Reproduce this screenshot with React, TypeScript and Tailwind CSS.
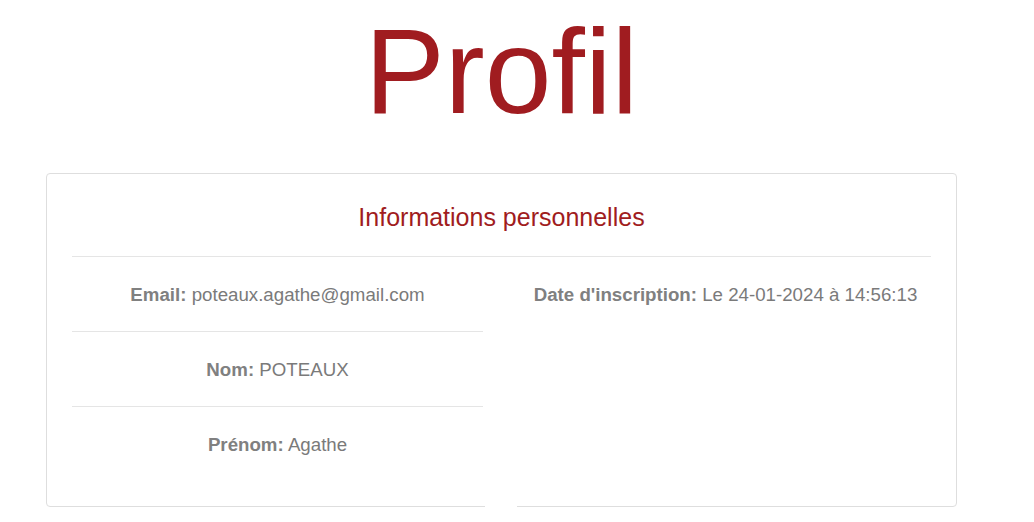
const rows = [
  { label: "Email:", value: "poteaux.agathe@gmail.com" },
  { label: "Nom:", value: "POTEAUX" },
  { label: "Prénom:", value: "Agathe" },
];

const InfoItem = ({ label, value }: { label: string; value: string }) => (
  <p className="py-[26.5px] text-center text-[18.7px] leading-[21px] text-[#7a7a7a]">
    <span className="font-bold text-[#808080]">{label}</span> {value}
  </p>
);

const App = () => {
  return (
    <div className="min-h-[522px] w-[1003px] bg-white font-['Liberation_Sans',Arial,sans-serif]">
      <h1 className="pt-[11px] text-center text-[120px] leading-none text-[#a01c20]">
        Profil
      </h1>
      <div className="relative mx-[46px] mt-[42px] rounded border border-[#dedede] px-[25px] pt-[25px] pb-[25px]">
        <h2 className="pt-[4px] pb-[24px] text-center text-[25px] leading-[29px] text-[#a01c20]">
          Informations personnelles
        </h2>
        <div className="grid grid-cols-2 gap-x-[37px] border-t border-[#e5e5e5]">
          <div className="divide-y divide-[#e5e5e5]">
            {rows.map((r) => (
              <InfoItem key={r.label} label={r.label} value={r.value} />
            ))}
          </div>
          <div>
            <InfoItem label="Date d'inscription:" value="Le 24-01-2024 à 14:56:13" />
          </div>
        </div>
        <div className="absolute -bottom-px left-[438px] h-[2px] w-[32px] bg-white" />
      </div>
    </div>
  );
};

export default App;
